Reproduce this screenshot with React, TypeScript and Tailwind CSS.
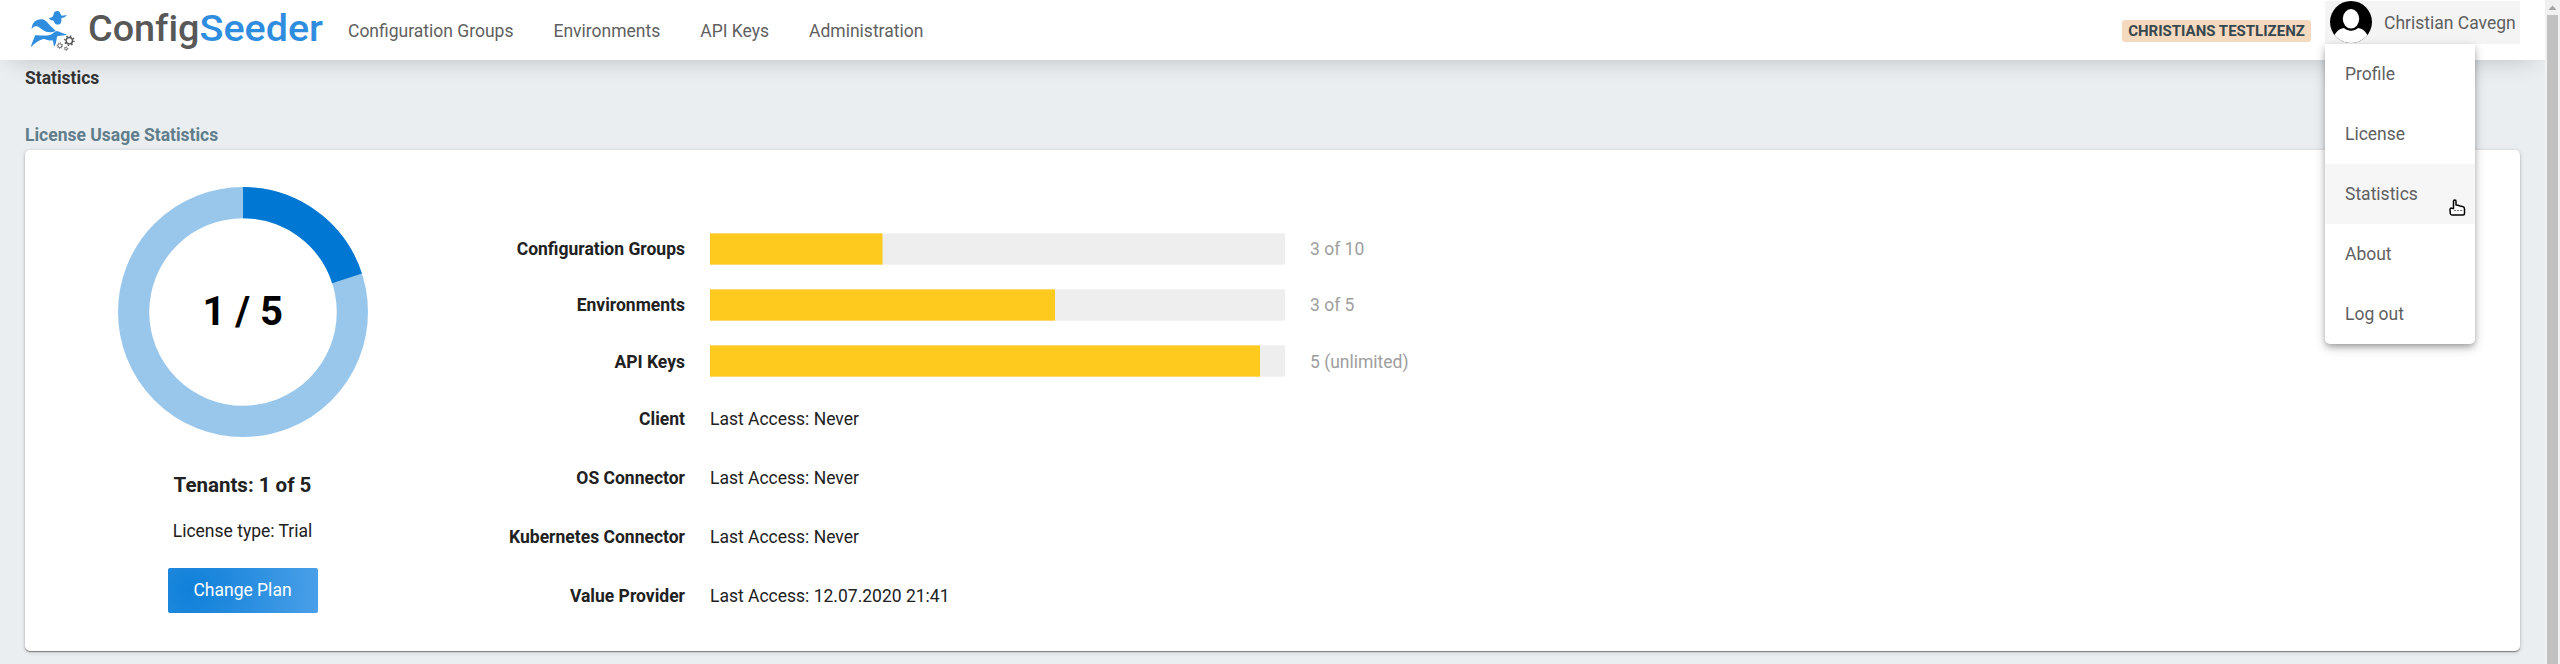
const FONT = "font-['Roboto',sans-serif]";

const navItems = ["Configuration Groups", "Environments", "API Keys", "Administration"];
const menuItems = ["Profile", "License", "Statistics", "About", "Log out"];

const usage = [
  { label: "Configuration Groups", fill: 172.5, text: "3 of 10" },
  { label: "Environments", fill: 345, text: "3 of 5" },
  { label: "API Keys", fill: 550, text: "5 (unlimited)" },
];

const access = [
  { label: "Client", text: "Last Access: Never" },
  { label: "OS Connector", text: "Last Access: Never" },
  { label: "Kubernetes Connector", text: "Last Access: Never" },
  { label: "Value Provider", text: "Last Access: 12.07.2020 21:41" },
];

function Gear({ cx, cy, r, w, teeth }: { cx: number; cy: number; r: number; w: number; teeth: number }) {
  const seg = (Math.PI * 2 * (r + w)) / (teeth * 2);
  return (
    <g fill="none" stroke="#555">
      <circle cx={cx} cy={cy} r={r} strokeWidth={w} />
      <circle cx={cx} cy={cy} r={r + w} strokeWidth={w * 1.1} strokeDasharray={`${seg * 0.8} ${seg * 1.2}`} />
    </g>
  );
}

function Logo() {
  return (
    <svg width="340" height="60" viewBox="0 0 340 60" className="block shrink-0">
      <g transform="scale(0.33333)">
        <g fill="#2f8de0">
          <path d="M161,42 C162,32 175,31 179,36 C182,41 182,46 186,47 L201,45 C197,51 190,53 184,54 C185,62 184,69 179,73 C171,76 163,71 161,62 C155,62 147,58 147,54 C153,54 160,51 161,42 Z" />
          <path d="M95,88 C95,66 110,56 127,58 C140,61 146,74 155,81 L167,92 C158,98 146,97 138,95 C126,91 119,82 112,79 C104,77 99,81 95,88 Z" />
          <path d="M92,142 C95,130 102,118 105,106 C120,105 136,109 150,105 C159,102 163,93 171,93 C181,95 188,102 201,103 C191,110 180,105 172,109 C168,118 171,130 162,140 C160,132 161,126 157,120 C146,125 140,117 130,117 C116,120 104,130 92,142 Z" />
        </g>
        <Gear cx={208} cy={122} r={9.5} w={4.2} teeth={8} />
        <Gear cx={179.5} cy={137} r={5.8} w={2.6} teeth={8} />
        <Gear cx={198} cy={146} r={3.6} w={2.2} teeth={6} />
      </g>
      <g fontSize="37" fontFamily="Roboto, sans-serif" fontWeight="500" className="[font-variant-ligatures:none]">
        <text x="88" y="41" textLength="111.5" lengthAdjust="spacingAndGlyphs" fill="#585858">
          Config
        </text>
        <text x="199.500" y="41" textLength="123.5" lengthAdjust="spacingAndGlyphs" fill="#2f8de0">
          Seeder
        </text>
      </g>
    </svg>
  );
}

function Avatar() {
  return (
    <svg width="42" height="42" viewBox="0 0 42 42" className="block shrink-0">
      <defs>
        <clipPath id="avatar">
          <circle cx="21" cy="21" r="21" />
        </clipPath>
      </defs>
      <g clipPath="url(#avatar)">
        <rect width="42" height="42" fill="#000" />
        <path d="M3,40 C4,32 8,28 14,27 C18,30.5 24,30.5 28,27 C34,28 38,32 39,40 L39,44 L3,44 Z" fill="#fff" />
        <ellipse cx="21" cy="18" rx="9.3" ry="11.3" fill="#000" />
        <ellipse cx="21" cy="17.8" rx="8.2" ry="9.7" fill="#fff" />
      </g>
    </svg>
  );
}

function HandCursor() {
  return (
    <svg width="17" height="17" viewBox="0 0 17 17" className="absolute left-[124px] top-[35px]">
      <path
        d="M4.5 9.5V2.2C4.5 .5 7 .5 7 2.2V6L9 6.3L11 7L13.5 7.6Q15.5 8 15.5 10V14.5Q15.5 16 14 16H3Q1.5 16 1.3 14.5L1 10.5Q1.2 8.8 2.8 9.2Z"
        fill="#fff"
        stroke="#000"
        strokeWidth="1.5"
        strokeLinejoin="round"
      />
      <path d="M5 11.5H13" stroke="#777" strokeWidth="1" strokeDasharray="2 1" />
    </svg>
  );
}

function Header() {
  return (
    <header className="relative z-10 flex h-[60px] shrink-0 items-start bg-white pr-[25px] shadow-[0_12px_25px_-12px_rgba(0,0,0,0.2)]">
      <Logo />
      <nav className="ml-[8px] flex h-[60px] flex-1 items-center gap-10 pt-[2px] text-[17.5px] text-[#5f5f5f]">
        {navItems.map((n) => (
          <a key={n}>{n}</a>
        ))}
      </nav>
      <span className="mr-[14px] mt-5 flex h-[22px] w-[189px] items-center justify-center whitespace-nowrap rounded-[3px] bg-[#f5d9be] text-[15px] font-bold text-[#37474f]">
        CHRISTIANS TESTLIZENZ
      </span>
      <div className="relative mt-px flex h-[43px] w-[195px] items-start bg-[#f4f4f4] pl-[5px]">
        <Avatar />
        <span className="ml-3 whitespace-nowrap text-[17.5px] leading-[44px] text-[#5f5f5f]">Christian Cavegn</span>
        <ul className="absolute left-0 top-[43px] w-[150px] rounded-b-[5px] bg-white text-[17.5px] text-[#5f5f5f] shadow-[0_3px_6px_-1px_rgba(0,0,0,0.3),0_4px_12px_0_rgba(0,0,0,0.18)]">
          {menuItems.map((m) => (
            <li
              key={m}
              className={
                m === "Statistics"
                  ? "relative flex h-[60px] items-center bg-[#f6f6f6] pl-5"
                  : "flex h-[60px] items-center pl-5"
              }
            >
              {m}
              {m === "Statistics" && <HandCursor />}
            </li>
          ))}
        </ul>
      </div>
    </header>
  );
}

function Donut() {
  const r = 109.375;
  const c = 2 * Math.PI * r;
  return (
    <svg width="250" height="250" viewBox="0 0 250 250" className="block">
      <circle cx="125" cy="125" r={r} fill="none" stroke="#99c7ec" strokeWidth="31.25" />
      <circle
        cx="125"
        cy="125"
        r={r}
        fill="none"
        stroke="#0077d3"
        strokeWidth="31.25"
        strokeDasharray={`${c / 5} ${c}`}
        transform="rotate(-90 125 125)"
      />
      <text x="124.700" y="138" textAnchor="middle" fontSize="40" fontWeight="700" fontFamily="Roboto, sans-serif">
        1 / 5
      </text>
    </svg>
  );
}

export default function App() {
  return (
    <div className={`flex h-[664px] w-[2560px] overflow-hidden bg-[#eaeef1] text-[17.5px] text-[#212121] ${FONT}`}>
      <div className="flex w-[2545px] flex-col overflow-hidden">
        <Header />
        <main className="px-[25px]">
          <h1 className="mt-[3px] h-[30px] font-bold leading-[30px] text-[#333]">Statistics</h1>
          <h2 className="mt-[27px] h-[30px] font-bold leading-[30px] text-[#607d8b]">License Usage Statistics</h2>
          <section className="flex h-[501px] rounded-[5px] bg-white shadow-[0_1px_1px_0_rgba(0,0,0,0.4),0_1px_4px_0_rgba(0,0,0,0.2)]">
            <div className="flex w-[435px] flex-col items-center pt-[37px]">
              <Donut />
              <p className="mt-[33px] text-[20.5px] font-bold leading-[30px]">Tenants: 1 of 5</p>
              <p className="mt-[16px] leading-[30px]">License type: Trial</p>
              <button className="mt-[22px] h-[45px] w-[150px] rounded-[2px] bg-[radial-gradient(circle_at_15%_50%,#0f80d9_0%,#4a9fe8_100%)] text-white">
                Change Plan
              </button>
            </div>
            <div className="pt-[71px]">
              {usage.map((u) => (
                <div key={u.label} className="flex h-[56.25px] items-center gap-[25px]">
                  <span className="w-[225px] text-right font-bold">{u.label}</span>
                  <svg width="575" height="32.5" viewBox="0 0 575 32.5" className="block">
                    <rect y="0.4" width="575" height="31.25" fill="#eee" />
                    <rect y="0.4" width={u.fill} height="31.25" fill="#ffca1e" />
                  </svg>
                  <span className="text-[#9e9e9e]">{u.text}</span>
                </div>
              ))}
              <div className="-mt-[0.25px]">
                {access.map((a) => (
                  <div key={a.label} className="flex h-[59px] items-center gap-[25px]">
                    <span className="w-[225px] text-right font-bold">{a.label}</span>
                    <span>{a.text}</span>
                  </div>
                ))}
              </div>
            </div>
          </section>
        </main>
      </div>
      <div className="flex w-[15px] flex-col items-center bg-[#f1f1f1]">
        <svg width="15" height="15" viewBox="0 0 15 15" className="block shrink-0">
          <path d="M3.5 10L7.5 5.5L11.5 10Z" fill="#a3a3a3" />
        </svg>
        <div className="w-[11px] flex-1 bg-[#c1c1c1]" />
      </div>
    </div>
  );
}
